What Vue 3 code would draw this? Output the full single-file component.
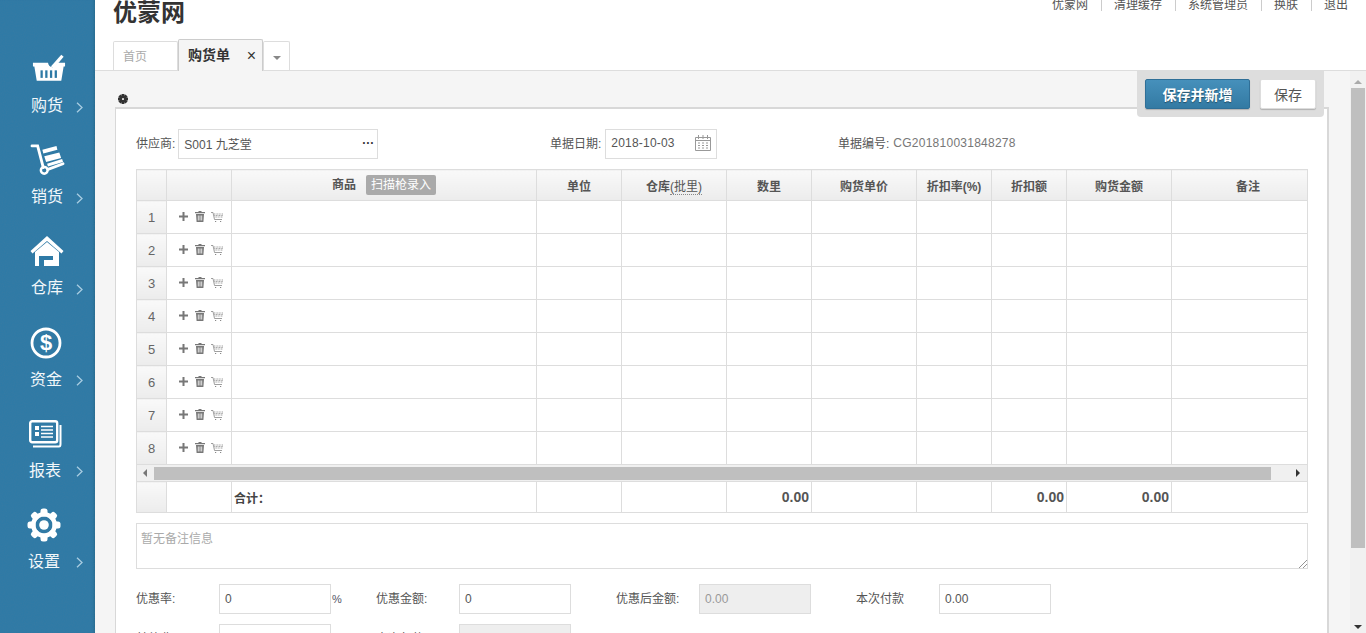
<script setup>
const navItems = [
  { key: "basket", label: "购货" },
  { key: "cart", label: "销货" },
  { key: "home", label: "仓库" },
  { key: "money", label: "资金" },
  { key: "report", label: "报表" },
  { key: "gear", label: "设置" },
];
const topLinks = ["优蒙网", "清理缓存", "系统管理员", "换肤", "退出"];
const columns = ["单位", "仓库", "数里", "购货单价", "折扣率(%)", "折扣额", "购货金额", "备注"];
const rows = [1, 2, 3, 4, 5, 6, 7, 8];
const gearTeeth = [0, 45, 90, 135, 180, 225, 270, 315];
</script>

<template>
  <div class="app">
    <aside class="nav">
      <svg class="nav__noise" width="95" height="633">
        <filter id="nav-noise">
          <feTurbulence type="fractalNoise" baseFrequency="0.9" numOctaves="2" />
          <feColorMatrix values="0 0 0 0 0.05  0 0 0 0 0.2  0 0 0 0 0.35  0 0 0 0.55 -0.12" />
        </filter>
        <rect width="95" height="633" filter="url(#nav-noise)" />
      </svg>
      <a v-for="item in navItems" :key="item.key" class="nav__item" :class="`nav__item--${item.key}`">
        <span class="nav__icon">
          <svg v-if="item.key === 'basket'" width="34" height="29" viewBox="0 0 36 30" fill="#fff">
            <path d="M20 14 L31 1.5 L33.5 3.5 L23.5 15.5 Z" />
            <path d="M1 10 H17 C17 14 23 18 27 10 H35 V14 H33.5 L31 29 H5 L2.5 14 H1 Z" />
            <g fill="#2e7aa6">
              <rect x="9" y="18" width="2.4" height="8" />
              <rect x="14" y="18" width="2.4" height="8" />
              <rect x="19" y="18" width="2.4" height="8" />
              <rect x="24" y="18" width="2.4" height="8" />
            </g>
          </svg>
          <svg v-else-if="item.key === 'cart'" width="36" height="32" viewBox="0 0 36 34">
            <path d="M1 2 H7 L13 25" fill="none" stroke="#fff" stroke-width="3" stroke-linecap="round" />
            <circle cx="14" cy="28" r="3.6" fill="none" stroke="#fff" stroke-width="2.6" />
            <path d="M18 27 L34 21" stroke="#fff" stroke-width="3" stroke-linecap="round" />
            <path fill="#fff" d="M12 6 L27 2 L28 6 L13 10 Z M14 13 L30 9 L32 15 L16 19 Z M17 21 L33 16 L34 19 L18 24 Z" />
          </svg>
          <svg v-else-if="item.key === 'home'" width="34" height="31" viewBox="0 0 34 31" fill="#fff">
            <path d="M17 0 L33.5 15 L31.5 17.5 L17 5 L2.5 17.5 L0.5 15 Z" />
            <path d="M5 16 L17 6 L29 16 V30 H5 Z" />
            <rect x="9" y="20" width="14" height="10" fill="#2e7aa6" />
            <rect x="14" y="24" width="9" height="6" />
          </svg>
          <svg v-else-if="item.key === 'money'" width="32" height="32" viewBox="0 0 32 32">
            <circle cx="16" cy="16" r="14" fill="none" stroke="#fff" stroke-width="2.8" />
            <text x="16" y="23" text-anchor="middle" fill="#fff" class="nav__dollar">$</text>
          </svg>
          <svg v-else-if="item.key === 'report'" width="33" height="28" viewBox="0 0 33 28">
            <rect x="1.2" y="1.2" width="27" height="21" rx="2" fill="none" stroke="#fff" stroke-width="2.4" />
            <path d="M31.5 5 V24 C31.5 25.5 31 26.5 30 26.5 H4" fill="none" stroke="#fff" stroke-width="2" />
            <rect x="6" y="6" width="4" height="4" fill="#fff" />
            <rect x="6" y="12" width="4" height="4" fill="#fff" />
            <path d="M12 6.5 H24 M12 10 H24 M12 13.5 H24 M12 17 H24" stroke="#fff" stroke-width="1.3" />
          </svg>
          <svg v-else width="34" height="34" viewBox="0 0 34 34" fill="#fff">
            <rect v-for="deg in gearTeeth" :key="deg" x="13.5" y="0.5" width="7" height="8" rx="2.5" :transform="`rotate(${deg} 17 17)`" />
            <path fill-rule="evenodd" d="M17 4 A13 13 0 1 1 16.99 4 Z M17 8.5 A8.5 8.5 0 1 0 17.01 8.5 Z" />
            <circle cx="17" cy="17" r="4.8" />
          </svg>
        </span>
        <span class="nav__label">{{ item.label }}</span>
        <svg class="nav__chevron" width="7" height="11" viewBox="0 0 7 11">
          <path d="M1 0.8 L6 5.5 L1 10.2" fill="none" stroke="#a9cde2" stroke-width="1.3" />
        </svg>
      </a>
    </aside>

    <div class="main">
      <header class="topbar">
        <div class="topbar__row">
          <h1 class="brand">优蒙网</h1>
          <ul class="links">
            <li v-for="link in topLinks" :key="link">{{ link }}</li>
          </ul>
        </div>
        <div class="tabs">
          <span class="tab">首页</span>
          <span class="tab tab--active">购货单<i class="tab__close">×</i></span>
          <span class="tab tab--more"><i class="caret"></i></span>
        </div>
      </header>

      <div class="workspace">
        <div class="content">
          <div class="actions">
            <button class="btn btn--primary">保存并新增</button>
            <button class="btn">保存</button>
          </div>
          <svg class="settings" width="10" height="10" viewBox="0 0 34 34" fill="#333">
            <rect v-for="deg in gearTeeth" :key="deg" x="12" y="0" width="10" height="9" :transform="`rotate(${deg} 17 17)`" />
            <path fill-rule="evenodd" d="M17 5 A12 12 0 1 1 16.99 5 Z M17 13.5 A3.5 3.5 0 1 0 17.01 13.5 Z" />
          </svg>

          <section class="card">
            <div class="bill">
              <div class="bill__group bill__group--vendor">
                <label>供应商:</label>
                <div class="field field--vendor">
                  <span>S001 九芝堂</span>
                  <b class="dots">···</b>
                </div>
              </div>
              <div class="bill__group bill__group--date">
                <label>单据日期:</label>
                <div class="field field--date">
                  <span class="date-text">2018-10-03</span>
                  <svg width="16" height="16" viewBox="0 0 16 16" fill="none" stroke="#999">
                    <path d="M0.5 2.5 H15.5 V15.5 H0.5 Z M0.5 5.5 H15.5" />
                    <path d="M3.5 0 V4 M8 0 V4 M12.5 0 V4" />
                    <path d="M3 8 H5 M7 8 H9 M11 8 H13 M3 10.5 H5 M7 10.5 H9 M11 10.5 H13 M3 13 H5 M7 13 H9 M11 13 H13" stroke-width="1.2" />
                  </svg>
                </div>
              </div>
              <div class="bill__group">
                <label>单据编号:</label>
                <span class="bill__no">CG201810031848278</span>
              </div>
            </div>

            <table class="grid">
              <colgroup>
                <col style="width: 30px" />
                <col style="width: 65px" />
                <col style="width: 305px" />
                <col style="width: 85px" />
                <col style="width: 105px" />
                <col style="width: 85px" />
                <col style="width: 105px" />
                <col style="width: 75px" />
                <col style="width: 75px" />
                <col style="width: 105px" />
                <col />
              </colgroup>
              <thead>
                <tr>
                  <th></th>
                  <th></th>
                  <th>商品<span class="scan">扫描枪录入</span></th>
                  <th v-for="col in columns" :key="col" :class="{ 'is-last': col === '备注' }">
                    {{ col }}<span v-if="col === '仓库'" class="dotted">(批里)</span>
                  </th>
                </tr>
              </thead>
              <tbody>
                <tr v-for="row in rows" :key="row">
                  <td class="num">{{ row }}</td>
                  <td class="ops">
                    <span class="ops__inner">
                      <svg width="9" height="9" viewBox="0 0 9 9" fill="#777">
                        <path d="M3.5 0 H5.5 V3.5 H9 V5.5 H5.5 V9 H3.5 V5.5 H0 V3.5 H3.5 Z" />
                      </svg>
                      <svg width="10" height="11" viewBox="0 0 10 11">
                        <path fill="#777" d="M3.5 0 H6.5 V1 H10 V2.2 H0 V1 H3.5 Z M1 3 H9 L8.4 11 H1.6 Z" />
                        <path stroke="#fff" stroke-width="0.8" d="M3.3 4.5 V9.5 M5 4.5 V9.5 M6.7 4.5 V9.5" />
                      </svg>
                      <svg width="12" height="10" viewBox="0 0 12 10" fill="none" stroke="#888" stroke-width="0.8">
                        <path d="M0 0.5 H2 L3.5 7.5 H11" />
                        <path d="M3 2 H12 M3.3 3.5 H12 M3.6 5 H12" stroke-dasharray="1 0.6" />
                        <path d="M4 9.5 H5.2 M9 9.5 H10.2" stroke-width="1" />
                      </svg>
                    </span>
                  </td>
                  <td v-for="n in 9" :key="n"></td>
                </tr>
                <tr class="hscroll">
                  <td colspan="11">
                    <div class="hscroll__bar">
                      <i class="arrow arrow--left"></i>
                      <div class="hscroll__thumb"></div>
                      <i class="arrow arrow--right"></i>
                    </div>
                  </td>
                </tr>
              </tbody>
              <tfoot>
                <tr>
                  <td class="num"></td>
                  <td></td>
                  <td class="total-label">合计：</td>
                  <td></td>
                  <td></td>
                  <td class="money">0.00</td>
                  <td></td>
                  <td></td>
                  <td class="money">0.00</td>
                  <td class="money">0.00</td>
                  <td></td>
                </tr>
              </tfoot>
            </table>

            <div class="remark">
              <span>暂无备注信息</span>
              <svg class="remark__grip" width="8" height="8" viewBox="0 0 8 8" stroke="#777" stroke-width="0.8">
                <path d="M0 8 L8 0 M4 8 L8 4" />
              </svg>
            </div>

            <div class="totals">
              <div class="totals__cell">
                <label>优惠率:</label>
                <div class="field field--num">0</div>
                <span class="percent">%</span>
              </div>
              <div class="totals__cell">
                <label>优惠金额:</label>
                <div class="field field--num">0</div>
              </div>
              <div class="totals__cell">
                <label>优惠后金额:</label>
                <div class="field field--num is-disabled">0.00</div>
              </div>
              <div class="totals__cell">
                <label>本次付款</label>
                <div class="field field--num">0.00</div>
              </div>
              <div class="totals__cell">
                <label>其他费用:</label>
                <div class="field field--num"></div>
              </div>
              <div class="totals__cell">
                <label>本次欠款:</label>
                <div class="field field--num is-disabled"></div>
              </div>
            </div>
          </section>
        </div>

        <div class="vscroll">
          <i class="arrow arrow--up"></i>
          <div class="vscroll__thumb"></div>
          <i class="arrow arrow--down"></i>
        </div>
      </div>
    </div>
  </div>
</template>

<style>
html,
body {
  margin: 0;
  height: 100%;
  overflow: hidden;
}
</style>

<style scoped>
.app {
  display: flex;
  height: 633px;
  overflow: hidden;
  background: #fff;
  color: #555;
  font: 12px "Liberation Sans", "Noto Sans CJK SC", sans-serif;
}
.nav {
  position: relative;
  flex: 0 0 95px;
  box-sizing: border-box;
  padding-top: 50px;
  background: #2e7aa6;
  box-shadow: inset -3px 0 3px -2px #256688;
}
.nav__noise {
  position: absolute;
  inset: 0;
}
.nav__item {
  position: relative;
  display: grid;
  grid-template-columns: 76px 1fr;
  grid-template-rows: 38px 20px;
  row-gap: 8px;
  height: 91.2px;
  color: #fff;
}
.nav__icon {
  grid-column: 1 / 3;
  height: 38px;
  display: flex;
  align-items: center;
  padding-left: 30px;
}
.nav__item--basket .nav__icon {
  padding-left: 32px;
}
.nav__item--basket .nav__icon svg {
  margin-top: -3px;
}
.nav__item--report .nav__icon {
  padding-left: 29px;
}
.nav__item--gear .nav__icon {
  padding-left: 27px;
}
.nav__label {
  font-size: 16px;
  line-height: 20px;
  padding-left: 31px;
  color: #f2f7fa;
}
.nav__item--money .nav__label {
  padding-left: 30px;
}
.nav__item--report .nav__label {
  padding-left: 29px;
}
.nav__item--gear .nav__label {
  padding-left: 28px;
}
.nav__chevron {
  align-self: center;
  margin-top: 2px;
}
.nav__dollar {
  font: bold 22px "Liberation Sans", sans-serif;
}
.main {
  flex: 1;
  min-width: 0;
  display: flex;
  flex-direction: column;
}
.topbar {
  flex: 0 0 71px;
  height: 71px;
  box-sizing: border-box;
  border-bottom: 1px solid #ddd;
  display: flex;
  flex-direction: column;
  justify-content: space-between;
}
.topbar__row {
  display: flex;
  justify-content: space-between;
  align-items: flex-start;
  padding: 0 18px 0 18px;
}
.brand {
  margin: 0;
  font-size: 24px;
  line-height: 25px;
  font-weight: 700;
  color: #333;
}
.links {
  display: flex;
  margin: 0;
  padding: 0;
  list-style: none;
  line-height: 11px;
  color: #555;
}
.links li {
  padding: 0 13px 0 12px;
  border-left: 1px solid #ccc;
}
.links li:first-child {
  border-left: 0;
}
.links li:last-child {
  padding-right: 0;
}
.tabs {
  display: flex;
  align-items: flex-end;
  padding-left: 18px;
}
.tab {
  box-sizing: border-box;
  width: 65px;
  height: 29px;
  padding: 6px 0 0 9px;
  border: 1px solid #ddd;
  border-bottom: 0;
  border-radius: 2px 2px 0 0;
  line-height: 18px;
  color: #aaa;
  background: #fff;
}
.tab--active {
  position: relative;
  width: 85px;
  height: 32px;
  margin-bottom: -1px;
  padding: 6px 0 0 9px;
  border-color: #ccc;
  background: #f5f5f5;
  font-size: 14px;
  font-weight: 700;
  color: #333;
}
.tab__close {
  position: absolute;
  right: 6px;
  top: 7px;
  font: 400 16px/18px "Liberation Sans", sans-serif;
}
.tab--more {
  width: 27px;
  padding: 0;
  display: flex;
  align-items: center;
  justify-content: center;
}
.caret {
  margin-top: 3px;
  border: 4px solid transparent;
  border-top: 4px solid #888;
  border-bottom: 0;
}
.workspace {
  flex: 1;
  min-height: 0;
  display: flex;
}
.content {
  position: relative;
  flex: 1;
  min-width: 0;
  box-sizing: border-box;
  padding: 23px 21px 0 20px;
  background: #f5f5f5;
  overflow: hidden;
}
.actions {
  position: absolute;
  top: 0;
  right: 26px;
  display: flex;
  gap: 10px;
  padding: 8px;
  background: #ddd;
  border-radius: 0 0 4px 4px;
}
.btn {
  height: 30px;
  width: 56px;
  padding: 0;
  border: 1px solid #ddd;
  border-radius: 2px;
  background: #fff;
  box-shadow: 0 1px 1px rgba(0, 0, 0, 0.2);
  color: #555;
  font: 14px "Liberation Sans", "Noto Sans CJK SC", sans-serif;
}
.btn--primary {
  width: 105px;
  border-color: #2f6f97;
  background: linear-gradient(#4690bb, #337aa3);
  color: #fff;
  font-weight: 700;
  text-shadow: 0 1px 1px rgba(0, 0, 0, 0.4);
}
.settings {
  display: block;
  margin-left: 3px;
}
.card {
  box-sizing: border-box;
  margin-top: 3px;
  height: 600px;
  padding: 20px 20px 0 20px;
  background: #fff;
  border: 1px solid #d8d8d8;
  border-width: 2px 2px 2px 1px;
}
.bill {
  display: flex;
  align-items: center;
  height: 30px;
  margin-bottom: 10px;
}
.bill__group {
  display: flex;
  align-items: center;
  gap: 3px;
}
.bill__group label {
  padding-bottom: 3px;
}
.bill__group--vendor {
  width: 414px;
}
.bill__group--date {
  width: 288px;
  gap: 4px;
}
.bill__no {
  color: #777;
  margin-left: 1px;
  padding-bottom: 3px;
  letter-spacing: 0.25px;
}
.field {
  box-sizing: border-box;
  height: 30px;
  display: flex;
  align-items: center;
  justify-content: space-between;
  border: 1px solid #ddd;
  color: #555;
  background: #fff;
}
.field--vendor {
  width: 200px;
  padding: 0 3px 2px 5px;
}
.dots {
  font-size: 12px;
  color: #333;
}
.field--date {
  width: 112px;
  padding: 0 5px 2px 5px;
}
.date-text {
  letter-spacing: 0.2px;
}
.field--num {
  width: 112px;
  padding: 0 5px;
}
.is-disabled {
  background: #eee;
  color: #999;
}
.grid {
  width: 1172px;
  table-layout: fixed;
  border-collapse: collapse;
}
.grid th,
.grid td {
  padding: 0;
  border: 1px solid #ddd;
}
.grid th {
  height: 30px;
  background: linear-gradient(#f9f9f9, #ececec);
  font-size: 12px;
  font-weight: 700;
  color: #555;
}
.grid th.is-last {
  padding-left: 17px;
}
.grid tbody td {
  height: 32px;
}
.dotted {
  font-weight: 400;
  border-bottom: 1px dotted #888;
}
.scan {
  display: inline-block;
  margin-left: 10px;
  padding: 0 5px;
  line-height: 20px;
  border-radius: 2px;
  background: #aaa;
  color: #fff;
  font-size: 12px;
  font-weight: 400;
}
.grid .num {
  background: linear-gradient(#f9f9f9, #ececec);
  text-align: center;
  font-size: 13px;
  color: #666;
}
.ops__inner {
  display: flex;
  align-items: center;
  gap: 7px;
  padding: 0 0 1px 12px;
}
.ops__inner svg:last-child {
  margin-left: -1px;
}
.grid .hscroll td {
  height: 16px;
  background: #f0f0f0;
}
.hscroll__bar {
  display: flex;
  align-items: center;
  height: 16px;
}
.hscroll__thumb {
  flex: 1;
  height: 13px;
  background: #bfbfbf;
}
.arrow {
  display: block;
  width: 0;
  height: 0;
  border: 4px solid transparent;
}
.arrow--left {
  margin: 0 7px 0 6px;
  border-left: 0;
  border-right-color: #777;
}
.arrow--right {
  margin: 0 7px 0 25px;
  border-right: 0;
  border-left-color: #333;
}
.arrow--up {
  margin-bottom: 4px;
  border-top: 0;
  border-bottom-color: #aaa;
}
.arrow--down {
  margin-top: 77px;
  border-bottom: 0;
  border-top-color: #333;
}
.grid tfoot td {
  height: 30px;
}
.total-label {
  padding-left: 2px !important;
  font-weight: 700;
  color: #444;
}
.money {
  padding-right: 2px !important;
  text-align: right;
  font: 700 14px "Liberation Sans", sans-serif;
  color: #555;
}
.remark {
  position: relative;
  box-sizing: border-box;
  height: 46px;
  width: 1172px;
  margin-top: 10px;
  padding: 5px 4px;
  border: 1px solid #ddd;
  color: #aaa;
}
.remark__grip {
  position: absolute;
  right: 0;
  bottom: 0;
}
.totals {
  display: grid;
  grid-template-columns: repeat(4, 240px);
  row-gap: 10px;
  margin-top: 15px;
}
.totals__cell {
  display: flex;
  align-items: center;
}
.totals__cell label {
  width: 83px;
  padding-bottom: 4px;
}
.percent {
  margin-left: 1px;
  font-size: 11px;
  color: #556;
}
.vscroll {
  flex: 0 0 16px;
  display: flex;
  flex-direction: column;
  align-items: center;
  padding-top: 9px;
  background: #f1f1f1;
  box-sizing: border-box;
}
.vscroll__thumb {
  flex: none;
  width: 14px;
  height: 460px;
  background: #bfbfbf;
}
</style>
